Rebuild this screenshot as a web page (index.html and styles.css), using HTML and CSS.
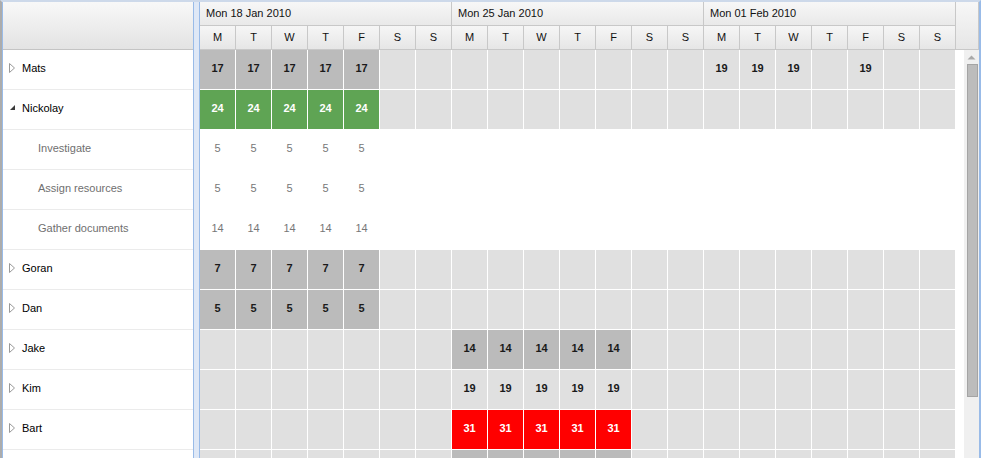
FILE: index.html
```html
<!DOCTYPE html>
<html>
<head>
<meta charset="utf-8">
<link rel="stylesheet" href="styles.css">
</head>
<body>
<div class="panel">
  <div class="left">
    <div class="left-head"></div>
    <div class="name-row"><svg class="tri" viewBox="0 0 10 10"><polygon points="1.5,0.5 6.5,5 1.5,9.5" fill="none" stroke="#9a9a9a" stroke-width="1"/></svg><span>Mats</span></div>
    <div class="name-row"><svg class="tri" viewBox="0 0 10 10"><polygon points="7,2 7,7 2,7" fill="#3a3a3a"/></svg><span>Nickolay</span></div>
    <div class="name-row child"><span>Investigate</span></div>
    <div class="name-row child"><span>Assign resources</span></div>
    <div class="name-row child"><span>Gather documents</span></div>
    <div class="name-row"><svg class="tri" viewBox="0 0 10 10"><polygon points="1.5,0.5 6.5,5 1.5,9.5" fill="none" stroke="#9a9a9a" stroke-width="1"/></svg><span>Goran</span></div>
    <div class="name-row"><svg class="tri" viewBox="0 0 10 10"><polygon points="1.5,0.5 6.5,5 1.5,9.5" fill="none" stroke="#9a9a9a" stroke-width="1"/></svg><span>Dan</span></div>
    <div class="name-row"><svg class="tri" viewBox="0 0 10 10"><polygon points="1.5,0.5 6.5,5 1.5,9.5" fill="none" stroke="#9a9a9a" stroke-width="1"/></svg><span>Jake</span></div>
    <div class="name-row"><svg class="tri" viewBox="0 0 10 10"><polygon points="1.5,0.5 6.5,5 1.5,9.5" fill="none" stroke="#9a9a9a" stroke-width="1"/></svg><span>Kim</span></div>
    <div class="name-row"><svg class="tri" viewBox="0 0 10 10"><polygon points="1.5,0.5 6.5,5 1.5,9.5" fill="none" stroke="#9a9a9a" stroke-width="1"/></svg><span>Bart</span></div>
    <div class="name-row"></div>
  </div>
  <div class="splitter"></div>
  <div class="right">
    <div class="thead">
      <div class="cols">
        <div class="week-row">
          <div class="week">Mon 18 Jan 2010</div>
          <div class="week">Mon 25 Jan 2010</div>
          <div class="week">Mon 01 Feb 2010</div>
        </div>
        <div class="day-row">
          <div class="day">M</div><div class="day">T</div><div class="day">W</div><div class="day">T</div><div class="day">F</div><div class="day">S</div><div class="day">S</div>
          <div class="day">M</div><div class="day">T</div><div class="day">W</div><div class="day">T</div><div class="day">F</div><div class="day">S</div><div class="day">S</div>
          <div class="day">M</div><div class="day">T</div><div class="day">W</div><div class="day">T</div><div class="day">F</div><div class="day">S</div><div class="day">S</div>
        </div>
      </div>
      <div class="head-strip"></div>
    </div>
    <div class="tbody">
      <div class="grid">
        <div class="row">
          <div class="c b">17</div><div class="c b">17</div><div class="c b">17</div><div class="c b">17</div><div class="c b">17</div><div class="c"></div><div class="c"></div>
          <div class="c"></div><div class="c"></div><div class="c"></div><div class="c"></div><div class="c"></div><div class="c"></div><div class="c"></div>
          <div class="c">19</div><div class="c">19</div><div class="c">19</div><div class="c"></div><div class="c">19</div>
        </div>
        <div class="row">
          <div class="c g">24</div><div class="c g">24</div><div class="c g">24</div><div class="c g">24</div><div class="c g">24</div>
        </div>
        <div class="row sub">
          <div class="c">5</div><div class="c">5</div><div class="c">5</div><div class="c">5</div><div class="c">5</div>
        </div>
        <div class="row sub">
          <div class="c">5</div><div class="c">5</div><div class="c">5</div><div class="c">5</div><div class="c">5</div>
        </div>
        <div class="row sub">
          <div class="c">14</div><div class="c">14</div><div class="c">14</div><div class="c">14</div><div class="c">14</div>
        </div>
        <div class="row">
          <div class="c b">7</div><div class="c b">7</div><div class="c b">7</div><div class="c b">7</div><div class="c b">7</div>
        </div>
        <div class="row">
          <div class="c b">5</div><div class="c b">5</div><div class="c b">5</div><div class="c b">5</div><div class="c b">5</div>
        </div>
        <div class="row">
          <div class="c"></div><div class="c"></div><div class="c"></div><div class="c"></div><div class="c"></div><div class="c"></div><div class="c"></div>
          <div class="c b">14</div><div class="c b">14</div><div class="c b">14</div><div class="c b">14</div><div class="c b">14</div>
        </div>
        <div class="row">
          <div class="c"></div><div class="c"></div><div class="c"></div><div class="c"></div><div class="c"></div><div class="c"></div><div class="c"></div>
          <div class="c">19</div><div class="c">19</div><div class="c">19</div><div class="c">19</div><div class="c">19</div>
        </div>
        <div class="row">
          <div class="c"></div><div class="c"></div><div class="c"></div><div class="c"></div><div class="c"></div><div class="c"></div><div class="c"></div>
          <div class="c r">31</div><div class="c r">31</div><div class="c r">31</div><div class="c r">31</div><div class="c r">31</div>
        </div>
        <div class="row">
          <div class="c"></div><div class="c"></div><div class="c"></div><div class="c"></div><div class="c"></div><div class="c"></div><div class="c"></div>
          <div class="c b"></div><div class="c b"></div><div class="c b"></div><div class="c b"></div><div class="c b"></div>
        </div>
      </div>
      <div class="gutter"></div>
      <div class="scroll">
        <svg class="arrow" viewBox="0 0 9 5"><polygon points="0.5,4.5 4.5,0.5 8.5,4.5" fill="#a9a9a9"/></svg>
        <div class="thumb"></div>
      </div>
    </div>
  </div>
</div>
</body>
</html>
```
FILE: styles.css
```css
* { box-sizing: border-box; }

html, body {
  margin: 0;
  padding: 0;
  background: #fff;
  overflow: hidden;
}

body {
  font-family: "Liberation Sans", Arial, sans-serif;
  font-size: 11px;
  color: #000;
}

.panel {
  display: flex;
  width: 981px;
  height: 458px;
  border-top: 2px solid #cdd9ea;
  border-left: 2px solid #acacac;
  border-right: 2px solid #99bbe8;
  overflow: hidden;
}

.left {
  flex: none;
  width: 191px;
  border-left: 1px solid #99bbe8;
  background: #fff;
}

.left-head {
  height: 48px;
  background: linear-gradient(#f8f8f8, #e3e3e3);
  border-bottom: 1px solid #c4c4c4;
}

.name-row {
  display: flex;
  align-items: center;
  height: 40px;
  padding-left: 5px;
  padding-bottom: 3px;
  border-bottom: 1px solid #ebebeb;
  color: #000;
}

.tri {
  width: 10px;
  height: 10px;
  flex: none;
  margin-right: 4px;
}

.name-row.child {
  padding-left: 35px;
  color: #6f6f6f;
}

.splitter {
  flex: none;
  width: 7px;
  background: #dfe8f6;
  border-left: 1px solid #99bbe8;
  border-right: 1px solid #99bbe8;
}

.right {
  flex: none;
  width: 779px;
  display: flex;
  flex-direction: column;
}

.thead {
  display: flex;
  height: 48px;
  flex: none;
}

.cols {
  width: 756px;
}

.week-row, .day-row {
  display: flex;
  height: 24px;
}

.week {
  width: 252px;
  padding-left: 6px;
  line-height: 23px;
  border-right: 1px solid #c8c8c8;
  border-bottom: 1px solid #c8c8c8;
  background: linear-gradient(#f7f7f7, #e9e9e9);
  color: #111;
}

.day {
  width: 36px;
  text-align: center;
  line-height: 23px;
  border-right: 1px solid #c8c8c8;
  border-bottom: 1px solid #c8c8c8;
  background: linear-gradient(#f6f6f6, #e6e6e6);
  color: #111;
}

.head-strip {
  width: 23px;
  border-right: 1px solid #c8c8c8;
  border-bottom: 1px solid #c8c8c8;
  background: linear-gradient(#f7f7f7, #e6e6e6);
}

.tbody {
  display: flex;
  flex: 1;
  min-height: 0;
}

.grid {
  width: 756px;
  flex: none;
}

.row {
  display: grid;
  grid-template-columns: repeat(21, 35px);
  column-gap: 1px;
  height: 40px;
  border-bottom: 1px solid #fff;
  background: repeating-linear-gradient(90deg, #e0e0e0 0 35px, #fff 35px 36px);
}

.row.sub {
  background: #fff;
}

.c {
  display: flex;
  align-items: center;
  justify-content: center;
  padding-bottom: 3px;
  font-weight: bold;
  color: #1a1a1a;
}

.c.b { background: #bbbbbb; }
.c.g { background: #5fa454; color: #fff; }
.c.r { background: #ff0000; color: #fff; }

.row.sub .c {
  font-weight: normal;
  color: #777;
}

.gutter {
  width: 8px;
  flex: none;
}

.scroll {
  width: 15px;
  flex: none;
  background: #f0f0f0;
  display: flex;
  flex-direction: column;
  align-items: center;
}

.arrow {
  width: 9px;
  height: 5px;
  margin-top: 5px;
}

.thumb {
  width: 11px;
  height: 333px;
  margin-top: 4px;
  margin-left: 1px;
  background: #bcbcbc;
  border: 1px solid #a4a4a4;
}
```
